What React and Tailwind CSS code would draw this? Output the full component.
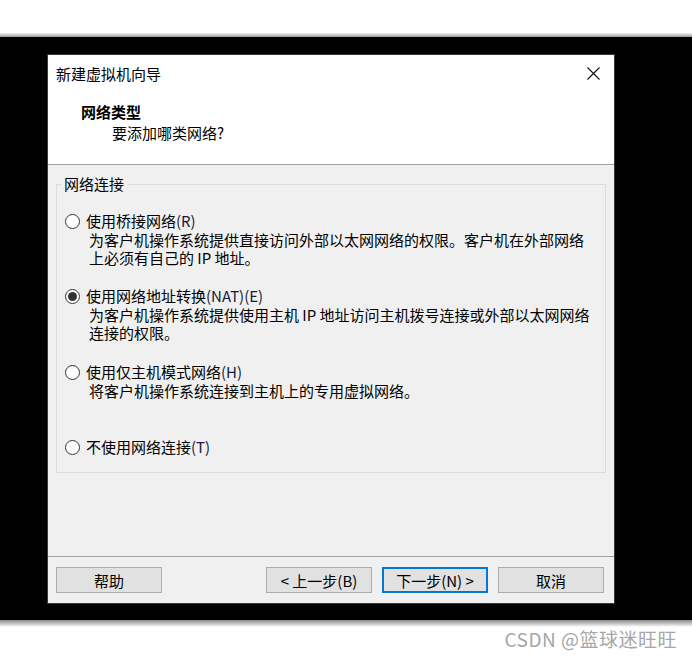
import React, { useState } from 'react';

const font = { fontFamily: '"Microsoft YaHei", "Noto Sans CJK SC", "Noto Sans", sans-serif' };

const options = [
  { id: 'bridge', label: '使用桥接网络', key: '(R)', gap: 'mt-0', desc: '为客户机操作系统提供直接访问外部以太网网络的权限。客户机在外部网络\n上必须有自己的 IP 地址。' },
  { id: 'nat', label: '使用网络地址转换', key: '(NAT)(E)', gap: 'mt-[19px]', desc: '为客户机操作系统提供使用主机 IP 地址访问主机拨号连接或外部以太网网络\n连接的权限。' },
  { id: 'host', label: '使用仅主机模式网络', key: '(H)', gap: 'mt-[20px]', desc: '将客户机操作系统连接到主机上的专用虚拟网络。' },
  { id: 'none', label: '不使用网络连接', key: '(T)', gap: 'mt-[37px]', desc: '' },
];

const Radio = ({ checked }) => (
  <span className="w-[15px] h-[15px] rounded-full border border-[#333] bg-white flex items-center justify-center shrink-0">
    {checked && <span className="w-[9px] h-[9px] rounded-full bg-[#333]" />}
  </span>
);

const Button = ({ children, primary }) => (
  <button
    className={
      primary
        ? 'w-[106px] h-[26px] bg-[#e1e1e1] border-2 border-[#0078d7] text-[15px] leading-none text-black flex items-center justify-center'
        : 'w-[106px] h-[26px] bg-[#e1e1e1] border border-[#adadad] text-[15px] leading-none text-black flex items-center justify-center'
    }
  >
    {children}
  </button>
);

const App = () => {
  const [selected, setSelected] = useState('nat');

  return (
    <div className="w-[692px] h-[657px] bg-white flex flex-col overflow-hidden" style={font}>
      <div className="h-[33px] shrink-0 bg-white" />
      <div className="h-[4px] shrink-0 bg-gradient-to-b from-[#f4f4f4] to-[#9a9a9a]" />

      <div className="h-[583px] shrink-0 bg-black pl-[47px] pt-[17px]">
        {/* dialog */}
        <div className="w-[568px] h-[550px] bg-[#f0f0f0] flex flex-col border border-[#3a3a3a]">
          {/* title + header */}
          <div className="h-[110px] bg-white border-b border-[#a0a0a0] flex flex-col shrink-0">
            <div className="h-[37px] flex items-center justify-between pl-[8px] pr-[14px]">
              <span className="text-[15px] text-black leading-none">新建虚拟机向导</span>
              <svg width="13" height="13" viewBox="0 0 13 13">
                <path d="M0.5 0.5 L12.5 12.5 M12.5 0.5 L0.5 12.5" stroke="#111" strokeWidth="1.1" fill="none" />
              </svg>
            </div>
            <div className="pl-[33px] pt-[9px] text-[15px] font-bold text-black leading-[21px]">网络类型</div>
            <div className="pl-[64px] text-[15px] text-black leading-[21px]">要添加哪类网络?</div>
          </div>

          {/* body */}
          <div className="flex-1 px-[8px] pt-[19px] flex flex-col">
            <div className="relative border border-[#dcdcdc] h-[289px] pt-[26px] pl-[8px]">
              <span className="absolute -top-[11px] left-[4px] bg-[#f0f0f0] px-[3px] text-[15px] leading-[20px] text-black">网络连接</span>
              <div className="flex flex-col">
                {options.map((o) => (
                  <div key={o.id} className={o.gap + ' cursor-default'} onClick={() => setSelected(o.id)}>
                    <div className="flex items-center gap-[6px] h-[20px]">
                      <Radio checked={selected === o.id} />
                      <span className="text-[15px] text-black leading-[20px]">
                        {o.label}
                        <span className="text-[#1a1a3a]">{o.key}</span>
                      </span>
                    </div>
                    {o.desc && (
                      <div className="pl-[24px] text-[15px] text-black leading-[18px] whitespace-pre-line">{o.desc}</div>
                    )}
                  </div>
                ))}
              </div>
            </div>
          </div>

          {/* footer */}
          <div className="h-[47px] shrink-0 border-t border-[#a0a0a0] flex items-start justify-between pt-[10px] pl-[8px] pr-[10px]">
            <Button>帮助</Button>
            <div className="flex gap-[10px]">
              <Button>&lt; 上一步(B)</Button>
              <Button primary>下一步(N) &gt;</Button>
              <Button>取消</Button>
            </div>
          </div>
        </div>
      </div>

      <div className="h-[7px] shrink-0 bg-gradient-to-b from-[#8a8a8a] to-white" />
      <div className="flex-1 flex justify-end items-start pr-[15px] pt-[1px]">
        <span className="text-[19px] tracking-[0.5px] text-[#a6a6a6] leading-[22px]">CSDN @篮球迷旺旺</span>
      </div>
    </div>
  );
};

export default App;
